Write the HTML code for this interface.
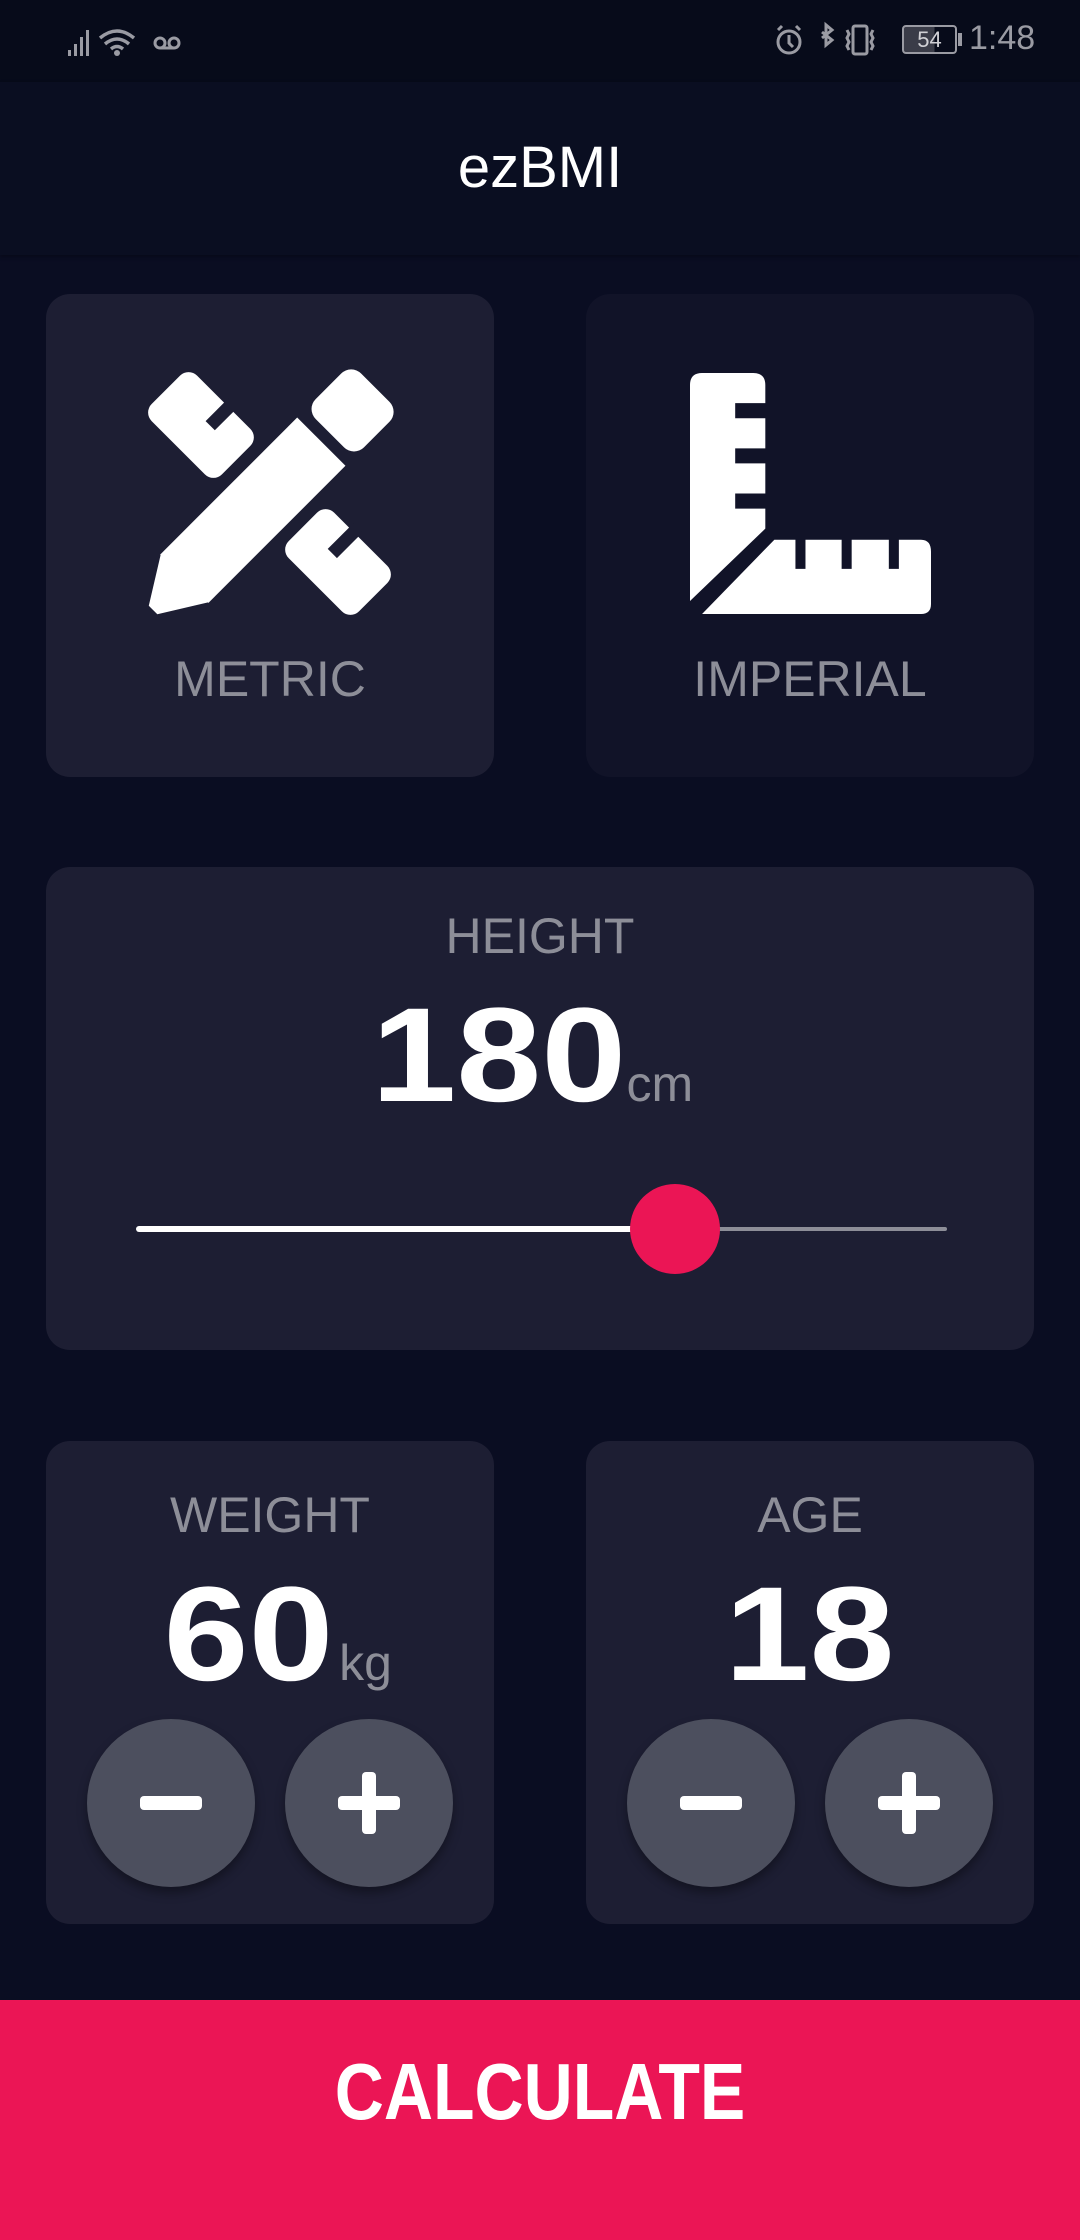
<!DOCTYPE html>
<html><head><meta charset="utf-8"><style>
*{margin:0;padding:0;box-sizing:border-box}
body{width:1080px;height:2240px;background:#0a0d22;font-family:"Liberation Sans",sans-serif;position:relative;overflow:hidden}
.abs{position:absolute}
.card{position:absolute;border-radius:24px;background:#1d1e33}
.lbl{position:absolute;left:0;right:0;text-align:center;color:#8d8e98;font-size:50px}
.num{position:absolute;left:0;right:0;text-align:center;color:#fff;font-weight:bold;font-size:134px;line-height:1;white-space:nowrap}
.num b{display:inline-block;transform:scaleX(1.14)}
.num small{font-size:50px;font-weight:normal;color:#8d8e98;margin-left:16px}
.btn{position:absolute;width:168px;height:168px;border-radius:50%;background:#4c4f5e;box-shadow:0 6px 10px rgba(0,0,0,.35)}
.btn .h{position:absolute;left:53px;top:77px;width:62px;height:14px;background:#fff;border-radius:4px}
.btn .v{position:absolute;left:77px;top:53px;width:14px;height:62px;background:#fff;border-radius:4px}
</style></head><body>
<div class="abs" style="left:0;top:0;width:1080px;height:82px;background:#070b1a"></div>
<svg class="abs" style="left:60px;top:20px" width="140" height="40" viewBox="0 0 140 40">
<g fill="#9a9ba3"><rect x="8" y="30" width="3" height="6"/><rect x="14" y="24" width="3" height="12"/><rect x="20" y="17" width="3" height="19"/><rect x="26" y="10" width="3" height="26"/></g>
<g fill="none" stroke="#9a9ba3" stroke-width="3.5"><path d="M40 18 Q57 4 74 18"/><path d="M45 24 Q57 14 69 24"/><path d="M51 29 Q57 24 63 29"/></g>
<circle cx="57" cy="33" r="3" fill="#9a9ba3"/>
<g fill="none" stroke="#9a9ba3" stroke-width="3"><circle cx="100" cy="23" r="5"/><circle cx="114" cy="23" r="5"/><path d="M100 28H114"/></g>
</svg>
<svg class="abs" style="left:770px;top:20px" width="120" height="40" viewBox="0 0 120 40">
<g fill="none" stroke="#9a9ba3" stroke-width="3"><circle cx="19" cy="22" r="11"/><path d="M19 15v8l4 4M8 10l4-4M30 10l-4-4"/>
<path d="M52 12l10 8-6 5V5l6 5-10 8"/><rect x="83" y="6" width="14" height="28" rx="2"/><path d="M77 10l2 4-2 4 2 4-2 4 2 4M103 10l-2 4 2 4-2 4 2 4-2 4"/></g>
</svg>
<div class="abs" style="left:902px;top:25px;width:55px;height:29px;border:2px solid #9a9ba3;border-radius:4px;background:linear-gradient(90deg,#3a3c48 60%,transparent 60%);color:#d0d0d5;font-size:22px;text-align:center;line-height:25px">54</div>
<div class="abs" style="left:958px;top:33px;width:4px;height:13px;background:#9a9ba3"></div>
<div class="abs" style="left:969px;top:19px;color:#9a9ba3;font-size:34px">1:48</div>

<div class="abs" style="left:0;top:82px;width:1080px;height:173px;background:#0a0e21;box-shadow:0 2px 4px rgba(0,0,0,.3)"></div>
<div class="abs" style="left:0;right:0;top:134px;text-align:center;color:#fff;font-size:58px;font-weight:500">ezBMI</div>

<div class="card" style="left:46px;top:294px;width:448px;height:483px">
<svg class="abs" style="left:103px;top:79px;overflow:visible" width="241" height="241" viewBox="0 0 240 240">
<g transform="rotate(-45 120 120)">
<g fill="#fff">
<rect x="0" y="86" width="193" height="68"/>
<polygon points="1,86 1,154 -44,126 -44,114"/>
<rect x="205" y="86" width="64" height="68" rx="14"/>
<rect x="88" y="-26" width="64" height="99" rx="12"/>
<rect x="88" y="167" width="64" height="99" rx="12"/>
</g>
<g fill="#1d1e33">
<rect x="126" y="24" width="32" height="13"/>
<rect x="122" y="200" width="36" height="13"/>
</g>
</g>
</svg>
<div class="lbl" style="top:356px">METRIC</div>
</div>
<div class="card" style="left:586px;top:294px;width:448px;height:483px;background:#111328">
<svg class="abs" style="left:104px;top:79px" width="241" height="241" viewBox="0 0 240 240" fill="#fff">
<path d="M0 12 Q0 0 12 0 H63 Q75 0 75 12 V30 H45 V45 H75 V75 H45 V90 H75 V120 H45 V135 H75 V155 L0 227 Z"/>
<path d="M12 240 L84 166 H105 V195 H115 V166 H151 V195 H161 V166 H198 V195 H208 V166 H230 Q240 166 240 178 V230 Q240 240 230 240 Z"/>
</svg>
<div class="lbl" style="top:356px">IMPERIAL</div>
</div>

<div class="card" style="left:46px;top:867px;width:988px;height:483px">
<div class="lbl" style="top:40px">HEIGHT</div>
<div class="num" style="top:122px"><b>180</b><small>cm</small></div>
<div class="abs" style="left:90px;top:359px;width:538px;height:6px;background:#fff;border-radius:3px"></div>
<div class="abs" style="left:628px;top:360px;width:273px;height:4px;background:#8d8e98;border-radius:2px"></div>
<div class="abs" style="left:584px;top:317px;width:90px;height:90px;border-radius:50%;background:#eb1555"></div>
</div>

<div class="card" style="left:46px;top:1441px;width:448px;height:483px">
<div class="lbl" style="top:45px">WEIGHT</div>
<div class="num" style="top:127px;left:26px"><b>60</b><small>kg</small></div>
<div class="btn" style="left:41px;top:278px"><div class="h"></div></div>
<div class="btn" style="left:239px;top:278px"><div class="h"></div><div class="v"></div></div>
</div>
<div class="card" style="left:586px;top:1441px;width:448px;height:483px">
<div class="lbl" style="top:45px">AGE</div>
<div class="num" style="top:127px"><b>18</b></div>
<div class="btn" style="left:41px;top:278px"><div class="h"></div></div>
<div class="btn" style="left:239px;top:278px"><div class="h"></div><div class="v"></div></div>
</div>

<div class="abs" style="left:0;top:2000px;width:1080px;height:240px;background:#eb1555"></div>
<div class="abs" style="left:0;right:0;top:2046px;text-align:center;color:#fff;font-size:80px;font-weight:bold;transform:scaleX(0.85)">CALCULATE</div>
</body></html>
